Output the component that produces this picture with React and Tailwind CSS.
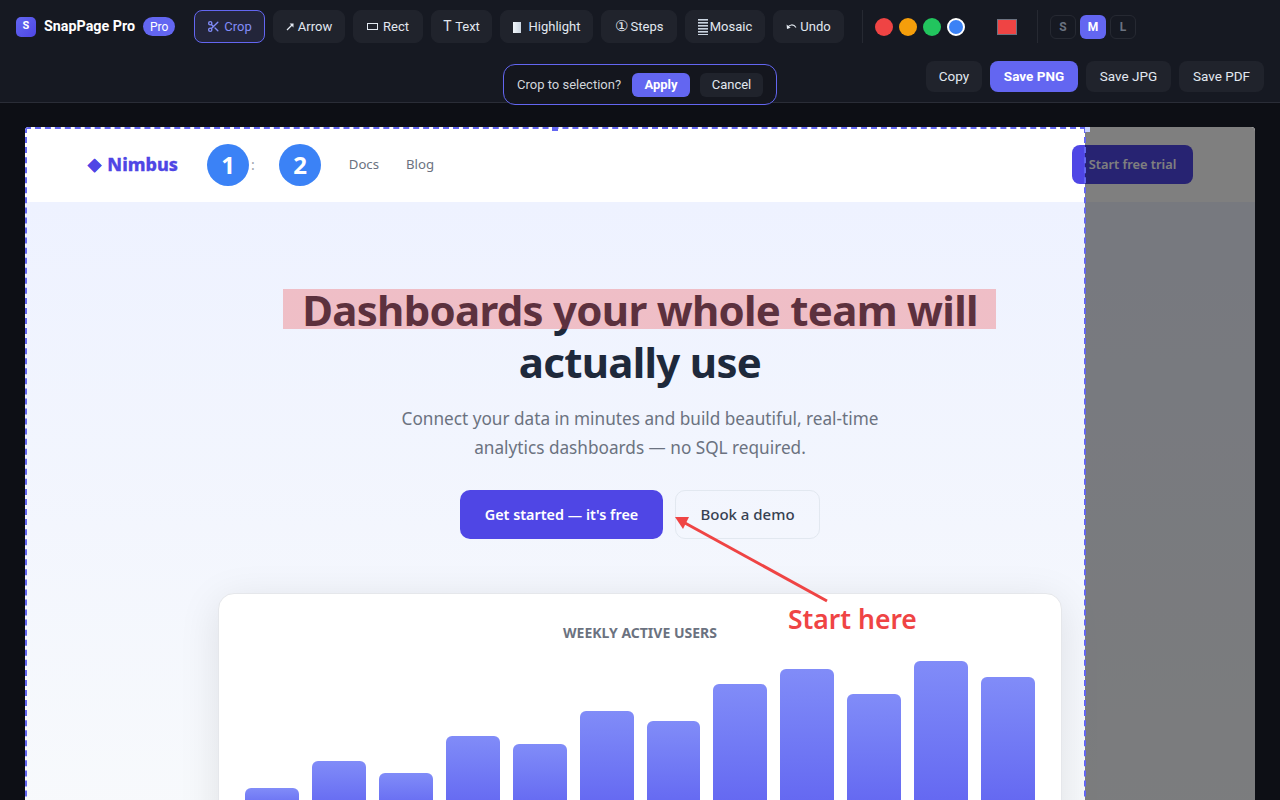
import React from "react";
import { Scissors } from "lucide-react";

const stripes = [0, 3, 6, 9, 12, 15];
const tools = [
  ["w-[71px]", "w-[17px]", <Scissors key="i" size={13} strokeWidth={2.5} />, "Crop"],
  ["w-[72px]", "w-[12px]", <svg key="i" width="9" height="9" viewBox="0 0 9 9"><path d="M1 8 L6 3" stroke="#e2e8f0" strokeWidth="1.3" /><path d="M3.6 1.6 L7.6 1.4 L7.4 5.4 Z" fill="#e2e8f0" /></svg>, "Arrow"],
  ["w-[70px]", "w-[16px]", <span key="i" className="block w-[11px] h-[7px] border border-[#e2e8f0]" />, "Rect"],
  ["w-[61px]", "w-[12px]", <span key="i" className="text-[14px]">T</span>, "Text"],
  ["w-[93px]", "w-[16px]", <span key="i" className="block w-[8px] h-[11px] mt-[2px] bg-gradient-to-r from-[#f1f5f9] to-[#cbd5e1]" />, "Highlight"],
  ["w-[76px]", "w-[16px]", <span key="i" className="text-[15px] leading-none">①</span>, "Steps"],
  ["w-[80px]", "w-[12px]", <svg key="i" width="10" height="16" viewBox="0 0 10 16">{stripes.map((y) => <rect key={y} x="0" y={y} width="10" height="1.6" fill="#cbd5e1" />)}</svg>, "Mosaic"],
  ["w-[71px]", "w-[14px]", <svg key="i" width="11" height="8" viewBox="0 0 11 8" fill="none"><path d="M1.5 5 C3 1.5 7.5 0.5 10 4.5" stroke="#e2e8f0" strokeWidth="1.1" /><path d="M0.6 1.6 L1 6 L4.6 4.8 Z" fill="#e2e8f0" /></svg>, "Undo"],
];
const bars = [22, 49, 37, 74, 66, 99, 89, 126, 141, 116, 149, 133];

export default function App() {
  return (
    <div className="relative flex flex-col h-screen overflow-hidden bg-[#0d0f15] font-['Roboto',sans-serif]">
      <header className="flex flex-col shrink-0 h-[103px] pt-[10px] px-4 bg-[#161922] border-b border-[#2a2d37]">
        <div className="flex items-center h-[33px]">
          <div className="flex items-center w-[178px]">
            <div className="flex items-center justify-center w-5 h-5 rounded-[5px] bg-gradient-to-br from-[#6366f1] to-[#4f46e5] text-white text-[11px] font-bold">S</div>
            <span className="ml-2 text-white text-[14.3px] font-bold whitespace-nowrap">SnapPage Pro</span>
            <span className="ml-2 px-[7px] h-[19px] flex items-center rounded-full bg-[#6366f1] text-white text-[12px]">Pro</span>
          </div>
          <div className="flex items-center gap-2">
            {tools.map(([width, box, icon, label], i) => (
              <button
                key={label}
                className={
                  (i === 0
                    ? "border-[#6366f1] bg-[#23253a] text-[#818cf8] "
                    : "border-[#20232c] bg-[#20232c] text-[#e2e8f0] ") +
                  "flex items-center justify-center h-[33px] rounded-lg border text-[13px] whitespace-nowrap " +
                  width
                }
              >
                <span className={`flex items-center shrink-0 ${box}`}>{icon}</span>
                {label}
              </button>
            ))}
          </div>
          <div className="w-px h-[33px] ml-[18px] bg-[#262932]" />
          <div className="flex items-center gap-[6px] ml-3">
            <span className="w-[18px] h-[18px] rounded-full bg-[#ef4444]" />
            <span className="w-[18px] h-[18px] rounded-full bg-[#f59e0b]" />
            <span className="w-[18px] h-[18px] rounded-full bg-[#22c55e]" />
            <span className="w-[18px] h-[18px] rounded-full bg-[#3b82f6] border-2 border-white" />
          </div>
          <span className="w-5 h-4 ml-[32px] bg-[#ef4444] border border-[#6b7280]" />
          <div className="w-px h-[33px] ml-5 bg-[#262932]" />
          <div className="flex items-center gap-1 ml-3">
            <span className="flex items-center justify-center w-[26px] h-6 rounded-md border border-[#262932] text-[#6b7280] text-[12px] font-bold">S</span>
            <span className="flex items-center justify-center w-[26px] h-6 rounded-md bg-[#6366f1] text-white text-[12px] font-bold">M</span>
            <span className="flex items-center justify-center w-[26px] h-6 rounded-md border border-[#262932] text-[#6b7280] text-[12px] font-bold">L</span>
          </div>
        </div>
        <div className="flex justify-end gap-2 mt-[18px]">
          <button className="h-[31px] w-[56px] rounded-lg bg-[#20232c] text-[#e2e8f0] text-[13.5px]">Copy</button>
          <button className="h-[31px] w-[88px] rounded-lg bg-[#6366f1] text-white text-[13.5px] font-bold">Save PNG</button>
          <button className="h-[31px] w-[85px] rounded-lg bg-[#20232c] text-[#e2e8f0] text-[13.5px]">Save JPG</button>
          <button className="h-[31px] w-[85px] rounded-lg bg-[#20232c] text-[#e2e8f0] text-[13.5px]">Save PDF</button>
        </div>
      </header>

      <div className="absolute left-[503px] top-[64px] z-20 flex items-center w-[274px] h-[41px] pl-[13px] rounded-xl border border-[#6366f1] bg-[#14161e]">
        <span className="w-[105px] text-[#d1d5db] text-[13px] whitespace-nowrap">Crop to selection?</span>
        <button className="ml-[10px] w-[58px] h-6 rounded-md bg-[#6366f1] text-white text-[13px] font-bold">Apply</button>
        <button className="ml-[10px] w-[63px] h-6 rounded-md bg-[#20232c] text-[#e2e8f0] text-[13px]">Cancel</button>
      </div>

      <main className="flex-1 min-h-0 px-[25px] pt-6">
        <div className="relative h-[720px] rounded overflow-hidden bg-white font-['Noto_Sans',sans-serif]">
          <nav className="flex items-center justify-between h-[75px] pl-[63px] pr-[62px] bg-white">
            <div className="flex items-center">
              <span className="flex items-center w-[90px] text-[#4f46e5] text-[18px] font-extrabold whitespace-nowrap [-webkit-text-stroke:0.3px_#4f46e5]">
                <span className="w-[20px] text-[16.5px]">◆</span>Nimbus
              </span>
              <span className="ml-[73px] text-[#9ca3af] text-sm">:</span>
              <span className="ml-[94px] text-[#6b7280] text-[13.2px]">Docs</span>
              <span className="ml-[27px] text-[#6b7280] text-[13.2px]">Blog</span>
            </div>
            <button className="w-[121px] h-[39px] rounded-lg bg-[#4f46e5] text-white text-[12.8px] font-semibold">Start free trial</button>
          </nav>

          <section className="flex flex-col items-center h-[645px] pt-[82px] bg-gradient-to-b from-[#eef2ff] to-[#f8fafc]">
            <h1 className="text-center text-[#1e293b] text-[42px] leading-[52px] font-bold tracking-[-0.72px] w-[760px]">
              Dashboards your whole team will actually use
            </h1>
            <p className="mt-[16px] w-[520px] text-center text-[#6b7280] text-[17.2px] leading-[29px]">
              Connect your data in minutes and build beautiful, real-time analytics dashboards — no SQL required.
            </p>
            <div className="flex gap-3 mt-7">
              <button className="w-[203px] h-[49px] rounded-[10px] bg-[#4f46e5] text-white text-[14.4px] font-semibold">Get started — it's free</button>
              <button className="w-[145px] h-[49px] rounded-[10px] border border-[#e2e8f0] text-[#374151] text-[15px] font-medium">Book a demo</button>
            </div>
            <div className="mt-[54px] w-[844px] h-[300px] px-[26px] pt-[29px] rounded-2xl border border-[#e5e7eb] bg-white shadow-[0_8px_40px_rgba(0,0,0,0.1)]">
              <div className="text-center text-[#6b7280] text-sm font-bold leading-[19px]">WEEKLY ACTIVE USERS</div>
              <div className="flex items-start gap-[13px] mt-[8px]">
                {bars.map((h, i) => (
                  <div key={i} className="relative flex-1 h-[160px]">
                    <div className="absolute bottom-0 inset-x-0 rounded-t-md bg-gradient-to-b from-[#818cf8] to-[#6366f1]" style={{ height: h }} />
                  </div>
                ))}
              </div>
            </div>
          </section>

          <div className="absolute left-[258px] top-[162px] w-[713px] h-10 bg-[#ef4444]/30" />

          <div className="absolute left-[1060px] right-0 top-0 bottom-0 bg-black/50" />
          <div className="absolute left-0 top-0 w-[1061px] h-[760px] border-2 border-dashed border-[#6366f1]" />
          <span className="absolute left-[527px] top-0 w-[6px] h-1 bg-[#6366f1]" />
          <span className="absolute left-[1060px] top-0 w-[5px] h-[5px] bg-[#c7d2fe]" />

          <span className="absolute left-[182px] top-[17px] flex items-center justify-center w-[42px] h-[42px] rounded-full bg-[#3b82f6] text-white text-[24px] font-bold">1</span>
          <span className="absolute left-[254px] top-[17px] flex items-center justify-center w-[42px] h-[42px] rounded-full bg-[#3b82f6] text-white text-[24px] font-bold">2</span>

          <svg className="absolute left-0 top-0" width="1230" height="720" viewBox="0 0 1230 720">
            <line x1="802" y1="474" x2="660" y2="396" stroke="#ef4444" strokeWidth="3" />
            <polygon points="650,390 664,390 658,402" fill="#ef4444" />
          </svg>
          <span className="absolute left-[763px] top-[472px] text-[#ef4444] text-[26.5px] leading-[40px] font-semibold whitespace-nowrap">Start here</span>
        </div>
      </main>
    </div>
  );
}
